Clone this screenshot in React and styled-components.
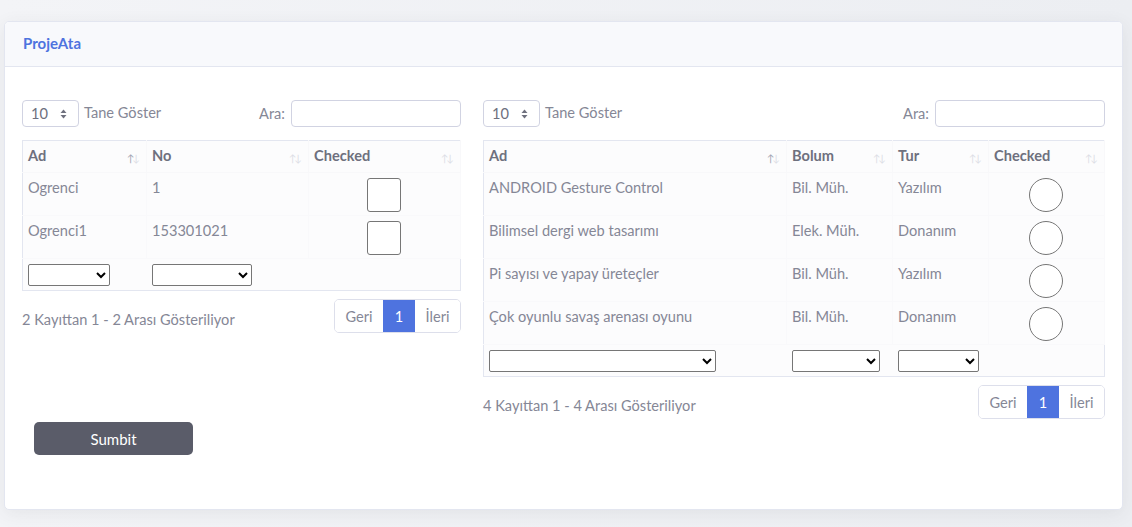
import React from 'react';
import styled, {createGlobalStyle} from 'styled-components';

const GlobalStyle = createGlobalStyle`
  body {
    margin: 0;
    background: linear-gradient(90deg, #f3f4f7 0%, #eceef2 100%);
    font-family: Lato, "Noto Sans", sans-serif;
    color: #858796;
  }
`;

const Page = styled.div`
  padding: 21px 9px 19px 4px;
`;

const Card = styled.section`
  background: #ffffff;
  border: 1px solid #e3e6f0;
  border-radius: 5px;
  box-shadow: 0 4px 18px rgba(58, 59, 69, 0.08);
  overflow: hidden;
`;

const CardHeader = styled.header`
  background: #f8f9fc;
  border-bottom: 1px solid #e3e6f0;
  height: 45px;
  box-sizing: border-box;
  display: flex;
  align-items: center;
  padding: 0 18px 3px;
`;

const Title = styled.h6`
  margin: 0;
  font-size: 15px;
  font-weight: 700;
  color: #4e73df;
`;

const CardBody = styled.div`
  padding: 33px 17px 54px 17px;
`;

const Columns = styled.div`
  display: grid;
  grid-template-columns: 439px 622px;
  column-gap: 22px;
  align-items: start;
`;

const TableBlock = styled.div`
  display: flex;
  flex-direction: column;
`;

const Controls = styled.div`
  display: flex;
  align-items: center;
  justify-content: space-between;
  height: 27px;
  margin-bottom: 13px;
`;

const Length = styled.label`
  display: flex;
  align-items: center;
  gap: 5px;
  font-size: 14.6px;
  color: #858796;
  padding-bottom: 2px;
`;

const LengthBox = styled.div`
  width: 57px;
  height: 27px;
  box-sizing: border-box;
  border: 1px solid #d1d3e2;
  border-radius: 4px;
  display: flex;
  align-items: center;
  justify-content: space-between;
  padding: 0 11px 0 8px;
  font-size: 14.6px;
  color: #6e707e;
  margin-bottom: -2px;
`;

const Search = styled.label`
  display: flex;
  align-items: center;
  gap: 6px;
  font-size: 14.6px;
  color: #858796;
`;

const SearchInput = styled.input`
  width: ${p => p.$w}px;
  height: 27px;
  box-sizing: border-box;
  border: 1px solid #d1d3e2;
  border-radius: 4px;
  outline: none;
`;

const Table = styled.table`
  width: 100%;
  table-layout: fixed;
  border-collapse: collapse;
  border: 1px solid #e3e6f0;
  background: #fcfcfd;
  font-size: 14.6px;
`;

const Th = styled.th`
  text-align: left;
  font-weight: 700;
  color: #6e707e;
  padding: 5px 6px 6px 5px;
  line-height: 20px;
  border-right: 1px solid #f8f8fa;
  border-bottom: 1px solid #f8f8fa;
  position: relative;
`;

const SortIcon = styled.span`
  position: absolute;
  right: 8px;
  top: 7px;
  font-size: 10px;
  font-weight: 400;
  letter-spacing: -2px;
  color: #dcdee6;

  & b {
    font-weight: 400;
    color: ${p => (p.$active ? '#a3a5b3' : '#dcdee6')};
  }
`;

const Td = styled.td`
  padding: 5px 6px 3px 5px;
  line-height: 20px;
  vertical-align: top;
  color: #858796;
  text-align: ${p => (p.$center ? 'center' : 'left')};
  border-right: 1px solid #f9f9fb;
  border-bottom: 1px solid #f9f9fb;
`;

const FilterTd = styled.td`
  padding: 5px 6px 4px 5px;
  vertical-align: top;
`;

const Filter = styled.select`
  width: ${p => p.$w}px;
  height: 22px;
  border: 1px solid #767676;
  border-radius: 2px;
  background: #fff;
  display: block;
`;

const CheckBox = styled.span`
  display: inline-block;
  width: 34px;
  height: 34px;
  box-sizing: border-box;
  border: 1px solid #767676;
  border-radius: ${p => (p.$round ? '50%' : '3px')};
  background: #fff;
  vertical-align: top;
`;

const Footer = styled.div`
  display: flex;
  justify-content: space-between;
  align-items: flex-end;
  margin-top: 8px;
`;

const Info = styled.div`
  font-size: 14.6px;
  color: #858796;
  padding-bottom: 5px;
`;

const Pager = styled.div`
  display: flex;
  height: 34px;
  border: 1px solid #dddfeb;
  border-radius: 5px;
  overflow: hidden;
  box-sizing: border-box;
`;

const PageItem = styled.span`
  display: flex;
  align-items: center;
  justify-content: center;
  width: ${p => p.$w}px;
  font-size: 14.6px;
  color: ${p => (p.$active ? '#ffffff' : '#858796')};
  background: ${p => (p.$active ? '#4e73df' : '#ffffff')};
`;

const SubmitButton = styled.button`
  margin: 3px 0 0 12px;
  width: 159px;
  height: 33px;
  border: none;
  border-radius: 5px;
  background: #5a5c69;
  color: #ffffff;
  font-family: inherit;
  font-size: 15px;
`;

const Arrows = () => (
  <svg width="7" height="10" viewBox="0 0 7 10">
    <path d="M3.5 0.5 L6.5 4 H0.5 Z" fill="#6e707e" />
    <path d="M3.5 9.5 L6.5 6 H0.5 Z" fill="#6e707e" />
  </svg>
);

const Header = ({label, active}) => (
  <Th>
    {label}
    <SortIcon $active={active}>
      <b>↑</b>↓
    </SortIcon>
  </Th>
);

const TableTop = ({inputWidth}) => (
  <Controls>
    <Length>
      <LengthBox>
        10 <Arrows />
      </LengthBox>
      Tane Göster
    </Length>
    <Search>
      Ara:
      <SearchInput $w={inputWidth} />
    </Search>
  </Controls>
);

const TableFooter = ({total}) => (
  <Footer>
    <Info>{`${total} Kayıttan 1 - ${total} Arası Gösteriliyor`}</Info>
    <Pager>
      <PageItem $w={48}>Geri</PageItem>
      <PageItem $w={32} $active>
        1
      </PageItem>
      <PageItem $w={45}>İleri</PageItem>
    </Pager>
  </Footer>
);

const students = [
  {ad: 'Ogrenci', no: '1'},
  {ad: 'Ogrenci1', no: '153301021'},
];

const projects = [
  {ad: 'ANDROID Gesture Control', bolum: 'Bil. Müh.', tur: 'Yazılım'},
  {ad: 'Bilimsel dergi web tasarımı', bolum: 'Elek. Müh.', tur: 'Donanım'},
  {ad: 'Pi sayısı ve yapay üreteçler', bolum: 'Bil. Müh.', tur: 'Yazılım'},
  {ad: 'Çok oyunlu savaş arenası oyunu', bolum: 'Bil. Müh.', tur: 'Donanım'},
];

const App = () => (
  <Page>
    <GlobalStyle />
    <Card>
      <CardHeader>
        <Title>ProjeAta</Title>
      </CardHeader>
      <CardBody>
        <Columns>
          <TableBlock>
            <TableTop inputWidth={170} />
            <Table>
              <colgroup>
                <col style={{width: 124}} />
                <col style={{width: 162}} />
                <col />
              </colgroup>
              <thead>
                <tr>
                  <Header label="Ad" active />
                  <Header label="No" />
                  <Header label="Checked" />
                </tr>
              </thead>
              <tbody>
                {students.map(s => (
                  <tr key={s.no}>
                    <Td>{s.ad}</Td>
                    <Td>{s.no}</Td>
                    <Td $center>
                      <CheckBox />
                    </Td>
                  </tr>
                ))}
                <tr>
                  <FilterTd>
                    <Filter $w={82} />
                  </FilterTd>
                  <FilterTd>
                    <Filter $w={100} />
                  </FilterTd>
                  <FilterTd />
                </tr>
              </tbody>
            </Table>
            <TableFooter total={2} />
          </TableBlock>

          <TableBlock>
            <TableTop inputWidth={170} />
            <Table>
              <colgroup>
                <col style={{width: 303}} />
                <col style={{width: 106}} />
                <col style={{width: 96}} />
                <col />
              </colgroup>
              <thead>
                <tr>
                  <Header label="Ad" active />
                  <Header label="Bolum" />
                  <Header label="Tur" />
                  <Header label="Checked" />
                </tr>
              </thead>
              <tbody>
                {projects.map(p => (
                  <tr key={p.ad}>
                    <Td>{p.ad}</Td>
                    <Td>{p.bolum}</Td>
                    <Td>{p.tur}</Td>
                    <Td $center>
                      <CheckBox $round />
                    </Td>
                  </tr>
                ))}
                <tr>
                  <FilterTd>
                    <Filter $w={227} />
                  </FilterTd>
                  <FilterTd>
                    <Filter $w={88} />
                  </FilterTd>
                  <FilterTd>
                    <Filter $w={81} />
                  </FilterTd>
                  <FilterTd />
                </tr>
              </tbody>
            </Table>
            <TableFooter total={4} />
          </TableBlock>
        </Columns>
        <SubmitButton>Sumbit</SubmitButton>
      </CardBody>
    </Card>
  </Page>
);

export default App;
